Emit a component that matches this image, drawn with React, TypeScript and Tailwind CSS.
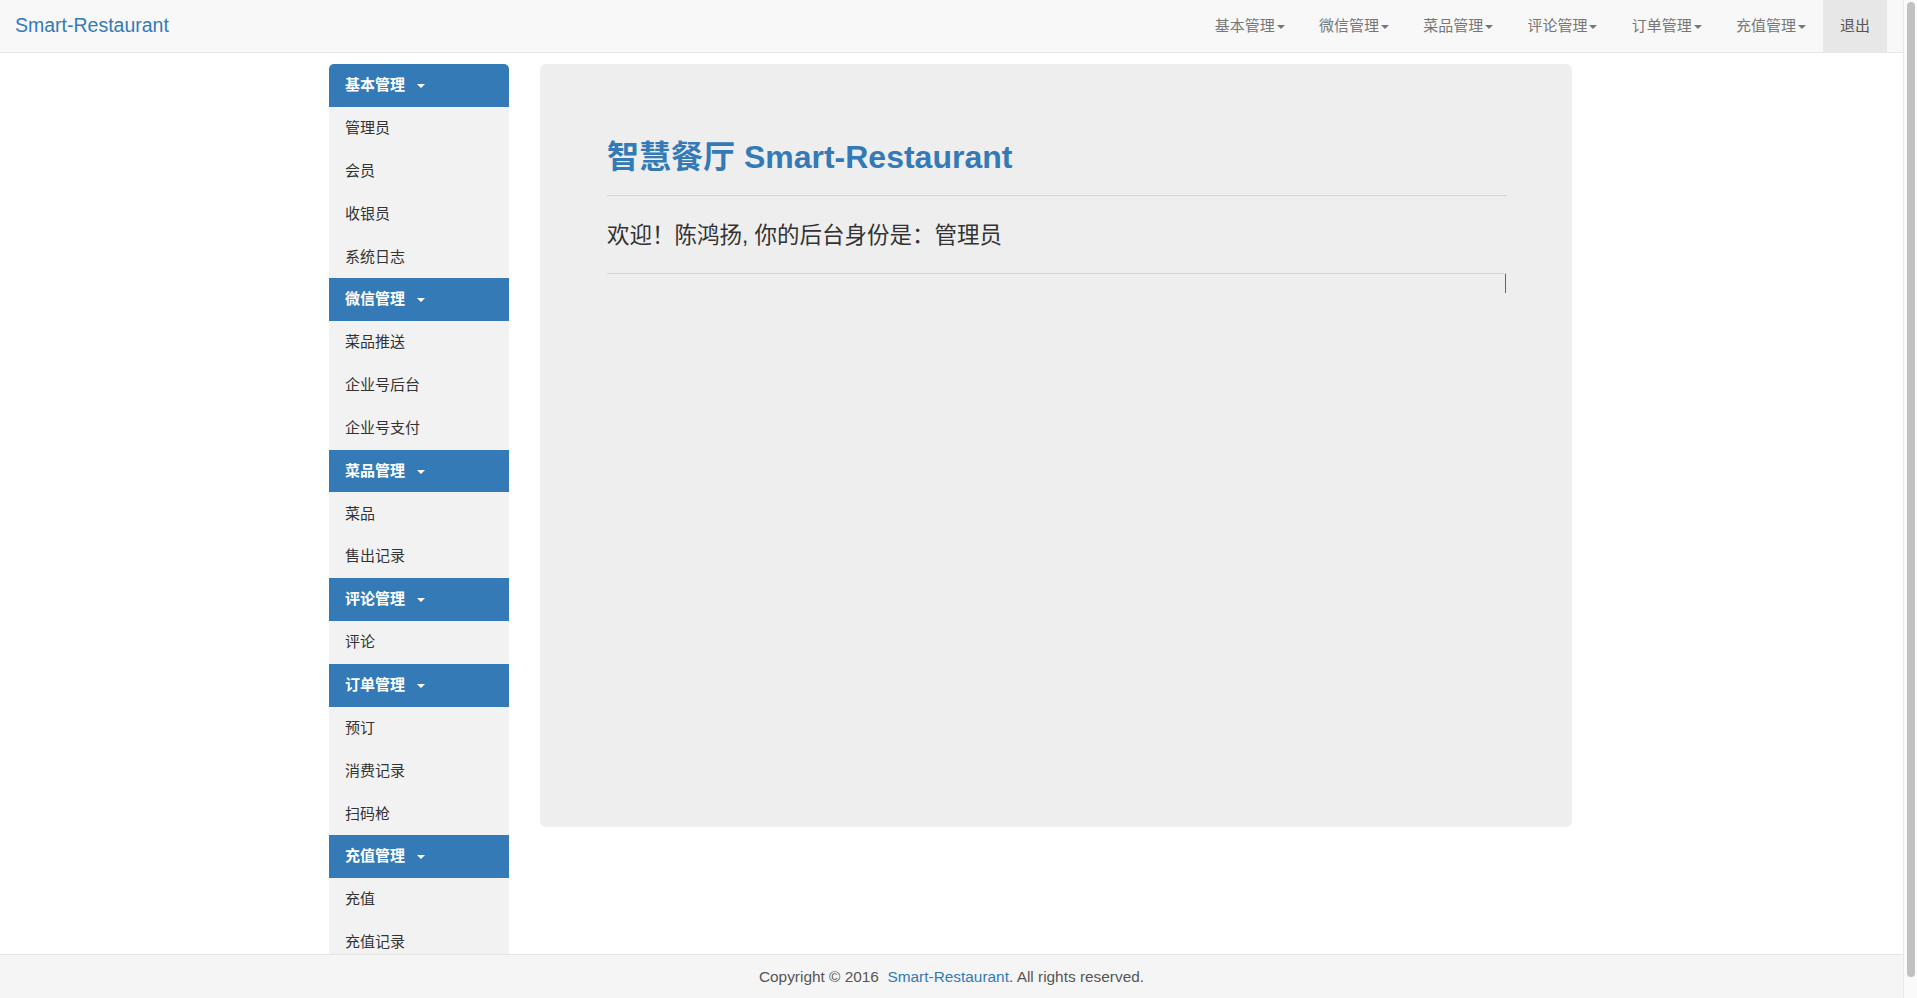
import React from 'react';

const font = "font-['Liberation_Sans','Noto_Sans_CJK_SC',sans-serif]";

const topMenus = ['基本管理', '微信管理', '菜品管理', '评论管理', '订单管理', '充值管理'];

const sideGroups: { title: string; items: string[] }[] = [
  { title: '基本管理', items: ['管理员', '会员', '收银员', '系统日志'] },
  { title: '微信管理', items: ['菜品推送', '企业号后台', '企业号支付'] },
  { title: '菜品管理', items: ['菜品', '售出记录'] },
  { title: '评论管理', items: ['评论'] },
  { title: '订单管理', items: ['预订', '消费记录', '扫码枪'] },
  { title: '充值管理', items: ['充值', '充值记录'] },
];

function Caret({ color, className }: { color: string; className?: string }) {
  return (
    <svg width="8" height="4" viewBox="0 0 8 4" className={className}>
      <polygon points="0,0 8,0 4,4" fill={color} />
    </svg>
  );
}

function Navbar() {
  return (
    <nav className="h-[53px] shrink-0 bg-[#f8f8f8] border-b border-[#e7e7e7] flex items-stretch">
      <a className="pl-[15px] flex items-center text-[19.5px] text-[#337ab7]">Smart-Restaurant</a>
      <ul className="ml-auto flex items-stretch pr-[16px]">
        {topMenus.map((m) => (
          <li key={m} className="flex items-center px-[17.1px] text-[15px] text-[#777]">
            {m}
            <Caret color="#777" className="ml-[2px] mt-[1px]" />
          </li>
        ))}
        <li className="flex items-center px-[17px] text-[15px] text-[#555] bg-[#e7e7e7]">退出</li>
      </ul>
    </nav>
  );
}

function Sidebar() {
  return (
    <aside className="w-[180px] shrink-0 rounded-t-[5px] overflow-hidden bg-[#f2f2f2] self-start">
      {sideGroups.map((g) => (
        <div key={g.title}>
          <div className="h-[42.85px] flex items-center pl-[16px] bg-[#337ab7] text-white font-bold text-[15px]">
            {g.title}
            <Caret color="#ffffff" className="ml-[12px] mt-[1px]" />
          </div>
          {g.items.map((it) => (
            <div key={it} className="h-[42.85px] flex items-center pl-[16px] text-[15px] text-[#333]">
              {it}
            </div>
          ))}
        </div>
      ))}
    </aside>
  );
}

function Welcome() {
  return (
    <section className="w-[1032px] h-[763px] shrink-0 bg-[#eeeeee] rounded-[6px] pl-[67px] pt-[75px]">
      <div className="w-[900px]">
        <h1 className="text-[32px] leading-[36px] font-bold text-[#337ab7]">智慧餐厅 Smart-Restaurant</h1>
        <hr className="mt-[20px] border-0 border-t border-[#d6d6d6]" />
        <p className="mt-[23.5px] text-[22.5px] leading-[31px] text-[#333]">欢迎！陈鸿扬, 你的后台身份是：管理员</p>
        <hr className="mt-[22.5px] border-0 border-t border-[#d6d6d6]" />
        <div className="flex justify-end">
          <div className="w-px h-[19px] bg-[#666] mr-[1px]" />
        </div>
      </div>
    </section>
  );
}

function Footer() {
  return (
    <footer className="h-[44px] shrink-0 bg-[#f5f5f5] border-t border-[#e5e5e5] flex items-center justify-center text-[15.4px] text-[#555]">
      <span>
        Copyright © 2016&nbsp; <a className="text-[#337ab7]">Smart-Restaurant</a>. All rights reserved.
      </span>
    </footer>
  );
}

export default function App() {
  return (
    <div className={`${font} h-[998px] w-full flex bg-white overflow-hidden`}>
      <div className="w-[1903px] shrink-0 flex flex-col">
        <Navbar />
        <main className="flex-1 overflow-hidden flex justify-center pt-[11px] pr-[2px]">
          <div className="w-[1243px] flex gap-[31px] items-start">
            <Sidebar />
            <Welcome />
          </div>
        </main>
        <Footer />
      </div>
      <div className="flex-1 bg-[#fafafa] border-l border-[#e8e8e8] pt-[2px] pl-[3px]">
        <div className="w-[8px] h-[975px] rounded-full bg-[#c1c1c1]" />
      </div>
    </div>
  );
}
